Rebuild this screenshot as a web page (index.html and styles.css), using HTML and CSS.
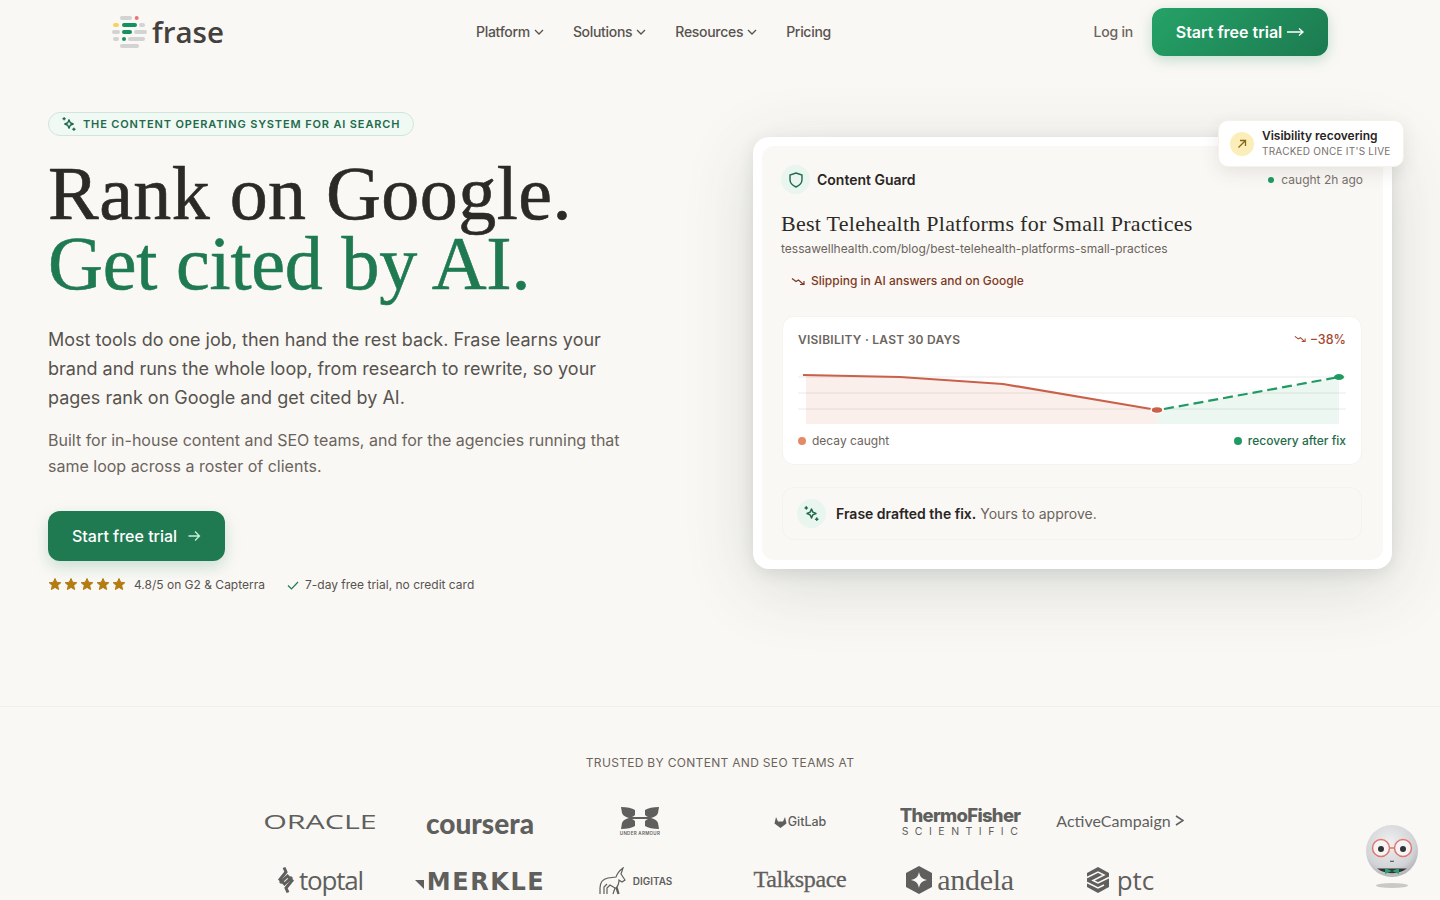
FILE: index.html
```html
<!DOCTYPE html>
<html lang="en">
<head>
    <meta charset="UTF-8">
    <meta name="viewport" content="width=device-width, initial-scale=1.0">
    <title>Frase</title>
    <link rel="stylesheet" href="styles.css">
</head>
<body>
    <!-- Top navigation -->
    <header class="nav">
        <a class="brand" href="#">
            <svg class="brand-mark" width="36" height="34" viewBox="0 0 36 34">
                <g fill="#d3d3d3">
                    <rect x="8" y="1" width="12" height="4" rx="2"/>
                    <rect x="27" y="8" width="6" height="4" rx="2"/>
                    <rect x="0" y="15" width="8" height="4" rx="2"/>
                    <rect x="22" y="15" width="13" height="4" rx="2"/>
                    <rect x="1" y="22" width="6" height="4" rx="2"/>
                    <rect x="16" y="22" width="17" height="4" rx="2"/>
                    <rect x="8" y="29" width="19" height="4" rx="2"/>
                </g>
                <circle cx="24.700" cy="3" r="2" fill="#e87474"/>
                <rect x="1" y="8" width="6" height="4" rx="2" fill="#f5d264"/>
                <rect x="10" y="8" width="15" height="4" rx="2" fill="#14915f"/>
                <rect x="10" y="15" width="10" height="4" rx="2" fill="#14915f"/>
                <circle cx="12" cy="24" r="2" fill="#14915f"/>
            </svg>
            <span class="brand-name">frase</span>
        </a>
        <nav class="nav-links">
            <a href="#">Platform <svg class="chev" width="10" height="6" viewBox="0 0 10 6"><path d="M1 1l4 4 4-4"/></svg></a>
            <a href="#">Solutions <svg class="chev" width="10" height="6" viewBox="0 0 10 6"><path d="M1 1l4 4 4-4"/></svg></a>
            <a href="#">Resources <svg class="chev" width="10" height="6" viewBox="0 0 10 6"><path d="M1 1l4 4 4-4"/></svg></a>
            <a href="#">Pricing</a>
        </nav>
        <div class="nav-actions">
            <a class="login" href="#">Log in</a>
            <a class="btn-nav" href="#">Start free trial
                <svg width="17" height="10" viewBox="0 0 17 10"><path d="M0 5h16M12 1.500L16 5l-4 3.500"/></svg>
            </a>
        </div>
    </header>

    <main class="hero">
        <section class="hero-copy">
            <div class="eyebrow">
                <svg class="spark" width="14" height="14" viewBox="2 2 20 20"><path d="M12 6l1.800 4.200L18 12l-4.200 1.800L12 18l-1.800-4.200L6 12l4.200-1.800z"/><path d="M5 3v3M3.500 4.500h3M19 18v3M17.500 19.500h3"/></svg>
                THE CONTENT OPERATING SYSTEM FOR AI SEARCH
            </div>
            <h1>Rank on Google.<br><em>Get cited by AI.</em></h1>
            <p class="lead">Most tools do one job, then hand the rest back. Frase learns your brand and runs the whole loop, from research to rewrite, so your pages rank on Google and get cited by AI.</p>
            <p class="sub">Built for in-house content and SEO teams, and for the agencies running that same loop across a roster of clients.</p>
            <a class="btn-main" href="#">Start free trial
                <svg width="14" height="14" viewBox="0 0 14 14"><path d="M1.500 7h11M8 2.500L12.500 7 8 11.500"/></svg>
            </a>
            <div class="proof">
                <svg class="stars" width="78" height="15" viewBox="0 0 78 15">
                    <path d="M7 1.500l1.700 3.800 4.100.4-3.100 2.700.9 4.100L7 10.400l-3.600 2.100.9-4.100L1.200 5.700l4.100-.4z"/>
                    <path d="M23 1.500l1.700 3.800 4.100.4-3.100 2.700.9 4.100L23 10.400l-3.600 2.100.9-4.100-3.100-2.700 4.100-.4z"/>
                    <path d="M39 1.500l1.700 3.800 4.100.4-3.100 2.700.9 4.100L39 10.400l-3.600 2.100.9-4.100-3.100-2.700 4.100-.4z"/>
                    <path d="M55 1.500l1.700 3.800 4.100.4-3.100 2.700.9 4.100L55 10.400l-3.600 2.100.9-4.100-3.100-2.700 4.100-.4z"/>
                    <path d="M71 1.500l1.700 3.800 4.100.4-3.100 2.700.9 4.100L71 10.400l-3.600 2.100.9-4.100-3.100-2.700 4.100-.4z"/>
                </svg>
                <span>4.8/5 on G2 &amp; Capterra</span>
                <svg class="check" width="14" height="14" viewBox="0 0 14 14"><path d="M2 7.500l3.500 3.500L12 4"/></svg>
                <span>7-day free trial, no credit card</span>
            </div>
        </section>

        <section class="card">
            <div class="toast">
                <span class="toast-icon"><svg width="10" height="10" viewBox="0 0 10 10"><path d="M1.500 8.500l7-7M3 1.500h5.500V7"/></svg></span>
                <div>
                    <div class="toast-title">Visibility recovering</div>
                    <div class="toast-sub">TRACKED ONCE IT'S LIVE</div>
                </div>
            </div>
            <div class="card-inner">
                <div class="card-head">
                    <div class="guard">
                        <span class="round-icon"><svg width="14" height="16" viewBox="0 0 14 16"><path d="M7 1l6 2v4.500c0 3.500-2.500 6-6 7.500-3.500-1.500-6-4-6-7.500V3z"/></svg></span>
                        Content Guard
                    </div>
                    <div class="caught"><i class="dot"></i>caught 2h ago</div>
                </div>
                <h2>Best Telehealth Platforms for Small Practices</h2>
                <div class="url">tessawellhealth.com/blog/best-telehealth-platforms-small-practices</div>
                <div class="slip">
                    <svg class="trend" width="14" height="9" viewBox="0 0 14 9"><path d="M1 1.500l4 3 2.500-1.500 5 4.500M9 7.500h4V4"/></svg>
                    Slipping in AI answers and on Google
                </div>

                <div class="chart-box">
                    <div class="chart-top">
                        <span class="chart-label">VISIBILITY · LAST 30 DAYS</span>
                        <span class="chart-delta"><svg class="trend" width="12" height="8" viewBox="0 0 14 9"><path d="M1 1.500l4 3 2.500-1.500 5 4.500M9 7.500h4V4"/></svg>−38%</span>
                    </div>
                    <svg class="chart" width="548" height="60" viewBox="0 0 548 60">
                        <path d="M8 11L102 13 205 20 359 46V60H8z" fill="#fbefec"/>
                        <path d="M359 46L541 13V60H359z" fill="#edf7f1"/>
                        <path class="grid" d="M0 13h548M0 29h548M0 45h548"/>
                        <path d="M5 11L102 13 205 20 359 46" fill="none" stroke="#c9604a" stroke-width="2.200"/>
                        <path d="M366 45L541 13" fill="none" stroke="#1f9a62" stroke-width="2.200" stroke-dasharray="10 5"/>
                        <ellipse cx="359" cy="46" rx="6" ry="3.500" fill="#c9604a" stroke="#fff" stroke-width="1.500"/>
                        <ellipse cx="541" cy="13" rx="5" ry="3" fill="#1f9a62"/>
                    </svg>
                    <div class="chart-legend">
                        <span><i class="dot dot-decay"></i>decay caught</span>
                        <span class="legend-good"><i class="dot"></i>recovery after fix</span>
                    </div>
                </div>

                <div class="fix">
                    <span class="round-icon"><svg class="spark" width="15" height="15" viewBox="2 2 20 20"><path d="M12 6l1.800 4.200L18 12l-4.200 1.800L12 18l-1.800-4.200L6 12l4.200-1.800z"/><path d="M5 3v3M3.500 4.500h3M19 18v3M17.500 19.500h3"/></svg></span>
                    <span><b>Frase drafted the fix.</b> Yours to approve.</span>
                </div>
            </div>
        </section>
    </main>

    <section class="logos">
        <div class="logos-title">TRUSTED BY CONTENT AND SEO TEAMS AT</div>
        <div class="logo-grid">
            <div class="logo l-oracle">ORACLE</div>
            <div class="logo l-coursera">coursera</div>
            <div class="logo l-ua">
                <svg width="44" height="22" viewBox="0 0 44 22"><path d="M3 0C9 0 14 1 17 3L17 8C16 9 15 9.500 14 10L30 10C29 9.500 28 9 27 8L27 3C30 1 35 0 41 0L40 6C39 9 36 10 33 11 36 12 39 13 40 16L41 22C35 22 30 21 27 19L27 14C28 13 29 12.500 30 12L14 12C15 12.500 16 13 17 14L17 19C14 21 9 22 3 22L4 16C5 13 8 12 11 11 8 10 5 9 4 6Z"/></svg>
                <span>UNDER ARMOUR</span>
            </div>
            <div class="logo l-gitlab">
                <svg width="13" height="12" viewBox="0 0 13 12"><path d="M6.500 12L.5 7.500 2 1l2 4.500h5L11 1l1.500 6.500z"/></svg>GitLab
            </div>
            <div class="logo l-thermo"><b>ThermoFisher</b><span>SCIENTIFIC</span></div>
            <div class="logo l-active">ActiveCampaign <svg width="9" height="11" viewBox="0 0 9 11"><path d="M1 1l7 4.500L1 10"/></svg></div>

            <div class="logo l-toptal">
                <svg width="18" height="28" viewBox="0 0 18 28"><path d="M7 1.500L9 6 3 13.500 7.500 18 15 11"/><path d="M11 26.500L9 22 15 14.500 10.500 10 3 17"/></svg>toptal
            </div>
            <div class="logo l-merkle"><svg class="merkle-mark" width="9" height="9" viewBox="0 0 9 9"><path d="M0 0h9v9z"/></svg>MERKLE</div>
            <div class="logo l-digitas">
                <svg width="28" height="28" viewBox="0 0 28 28"><path d="M1 27v-6c0-5 3-9 8-10l8-1c1-3 3-6 7-9l-2 6 4 6-3 2-3-2c0 4-1 6-3 8l2 6M8 27v-6l3-3 5 3-2 6M5 27v-7l3-3M20 27l-2-7"/></svg>
                DIGITAS
            </div>
            <div class="logo l-talk">Talkspace</div>
            <div class="logo l-andela">
                <svg width="26" height="28" viewBox="0 0 26 28"><path fill-rule="evenodd" d="M13 0l13 7v14l-13 7-13-7V7zM13 6c-1 5-3 7-8 8 5 1 7 3 8 8 1-5 3-7 8-8-5-1-7-3-8-8z"/></svg>andela
            </div>
            <div class="logo l-ptc">
                <svg width="24" height="26" viewBox="0 0 24 26"><path d="M12 0l11 6v14l-11 6-11-6V6z"/><path class="ptc-cut" d="M1 10.500L12 5l6 3-11 5.500 5 2.500 11-5.500M1 15.500L12 21l6-3"/></svg>ptc
            </div>
        </div>
    </section>

    <!-- Floating assistant -->
    <div class="bot">
        <div class="bot-head">
            <svg width="52" height="52" viewBox="0 0 52 52">
                <defs>
                    <radialGradient id="botFace" cx="45%" cy="35%" r="70%"><stop offset="0" stop-color="#f0f0f1"/><stop offset="0.7" stop-color="#d2d3d6"/><stop offset="1" stop-color="#a9abae"/></radialGradient>
                </defs>
                <circle cx="26" cy="26" r="26" fill="url(#botFace)"/>
                <path d="M11 43.500h30a26 26 0 0 1-30 0z" fill="#333"/>
                <path d="M26 46l-7-3v6l7-3 7 3v-6z" fill="#2f9e73"/>
                <circle cx="15" cy="23" r="8.500" fill="#f4f4f5" stroke="#e07570" stroke-width="1.500"/>
                <circle cx="37" cy="23" r="8.500" fill="#f4f4f5" stroke="#e07570" stroke-width="1.500"/>
                <path d="M23.500 23h5" stroke="#e07570" stroke-width="1.500"/>
                <circle cx="15" cy="24" r="3" fill="#333"/>
                <circle cx="37" cy="24" r="3" fill="#333"/>
                <path d="M24 36q2 1 4 0" fill="none" stroke="#444"/>
            </svg>
        </div>
        <div class="bot-shadow"></div>
    </div>
</body>
</html>
```

FILE: styles.css
```css
* {
    box-sizing: border-box;
}
html, body {
    height: 900px;
    overflow: hidden;
}
body {
    margin: 0;
    background-color: #faf8f5;
    color: #57534e;
    font-family: Inter, "Liberation Sans", sans-serif;
}
a {
    color: inherit;
    text-decoration: none;
}

/* nav */
.nav {
    display: flex;
    align-items: center;
    height: 64px;
    padding: 0 112px;
}
.brand {
    display: flex;
    align-items: center;
    gap: 4px;
    width: 364px;
}
.brand-name {
    font-family: "Open Sans", sans-serif;
    font-size: 29.500px;
    font-weight: 600;
    color: #44403c;
    line-height: 1;
}
.nav-links {
    display: flex;
    gap: 29px;
    padding-bottom: 1px;
    font-size: 14px;
    font-weight: 500;
    letter-spacing: -0.300px;
}
.nav-links a {
    display: flex;
    align-items: center;
    gap: 4px;
}
.chev {
    fill: none;
    stroke: currentColor;
    stroke-width: 1.300;
}
.nav-actions {
    display: flex;
    align-items: center;
    gap: 19px;
    margin-left: auto;
}
.login {
    padding-bottom: 1px;
    font-size: 14px;
    font-weight: 500;
    letter-spacing: -0.200px;
    color: #6b645c;
}
.btn-nav {
    display: flex;
    align-items: center;
    justify-content: center;
    gap: 5px;
    width: 176px;
    height: 48px;
    border-radius: 12px;
    background: linear-gradient(135deg, #25a267, #1c7a50);
    box-shadow: 0 4px 14px rgba(31, 138, 90, 0.25);
    color: #fff;
    font-size: 16px;
    font-weight: 600;
}
.btn-nav svg {
    fill: none;
    stroke: #fff;
    stroke-width: 1.300;
}

/* hero */
.hero {
    display: flex;
    justify-content: space-between;
    height: 643px;
    padding: 48px 48px 0;
    border-bottom: 1px solid #f1efea;
}
.hero-copy {
    width: 600px;
}
.eyebrow {
    display: inline-flex;
    align-items: center;
    gap: 7px;
    height: 24px;
    padding: 0 13px 1px;
    border: 1px solid #cfe6da;
    border-radius: 12px;
    background-color: #f1f9f5;
    color: #1f6b4a;
    font-size: 11px;
    font-weight: 600;
    letter-spacing: 0.860px;
}
.spark {
    fill: none;
    stroke: #1f6b4a;
    stroke-width: 2;
    stroke-linecap: round;
    stroke-linejoin: round;
}
h1 {
    margin: 22px 0 0;
    font-family: "Liberation Serif", serif;
    font-size: 76px;
    font-weight: 400;
    line-height: 70px;
    letter-spacing: 0.450px;
    -webkit-text-stroke: 0.600px currentColor;
    color: #2c2a26;
}
h1 em {
    font-style: normal;
    letter-spacing: -0.200px;
    color: #1f7a52;
}
.lead {
    margin: 28px 0 0;
    font-size: 18px;
    line-height: 28.800px;
    color: #57534e;
}
.sub {
    margin: 15px 0 0;
    width: 590px;
    font-size: 16px;
    line-height: 26px;
    color: #6b645c;
}
.btn-main {
    display: inline-flex;
    align-items: center;
    gap: 10px;
    margin-top: 32px;
    height: 50px;
    padding: 0 24px;
    border-radius: 12px;
    background-color: #1f7a52;
    box-shadow: 0 6px 16px rgba(31, 138, 90, 0.22);
    color: #fff;
    font-size: 16px;
    font-weight: 500;
}
.btn-main svg {
    fill: none;
    stroke: #c9f0dc;
    stroke-width: 1.300;
}
.proof {
    display: flex;
    align-items: center;
    margin-top: 16px;
    font-size: 12px;
    color: #57534e;
}
.stars {
    margin-right: 8px;
    fill: #b47c10;
    stroke: #b47c10;
    stroke-linejoin: round;
}
.check {
    margin: 0 5px 0 21px;
    fill: none;
    stroke: #1f7a52;
    stroke-width: 1.200;
}

/* card */
.card {
    position: relative;
    width: 639px;
    height: 432px;
    margin-top: 25px;
    padding: 9px;
    border-radius: 16px;
    background-color: #fff;
    box-shadow: 0 4px 16px rgba(40, 60, 50, 0.1), 0 16px 70px rgba(40, 60, 50, 0.16);
}
.card-inner {
    height: 414px;
    padding: 19px 20px 0 19px;
    border-radius: 12px;
    background-color: #faf8f5;
}
.toast {
    position: absolute;
    top: -17px;
    right: -12px;
    display: flex;
    align-items: center;
    gap: 8px;
    width: 186px;
    height: 47px;
    padding: 0 11px;
    border: 1px solid #f6f2e8;
    border-radius: 10px;
    background-color: #fff;
    box-shadow: 0 6px 18px rgba(60, 60, 50, 0.1);
}
.toast-icon {
    flex: none;
    display: flex;
    align-items: center;
    justify-content: center;
    width: 24px;
    height: 24px;
    border-radius: 50%;
    background-color: #fbeeb9;
}
.toast-icon svg {
    fill: none;
    stroke: #8a6414;
    stroke-width: 1.300;
}
.toast-title {
    font-size: 12px;
    font-weight: 600;
    color: #292524;
    line-height: 16px;
}
.toast-sub {
    font-size: 10px;
    letter-spacing: 0.230px;
    color: #78716c;
    line-height: 15px;
    white-space: nowrap;
}
.card-head {
    display: flex;
    justify-content: space-between;
    align-items: flex-start;
}
.guard {
    display: flex;
    align-items: center;
    gap: 7px;
    font-size: 14px;
    font-weight: 600;
    color: #292524;
}
.round-icon {
    display: flex;
    align-items: center;
    justify-content: center;
    width: 29px;
    height: 29px;
    border-radius: 50%;
    background-color: #e9f5ef;
}
.round-icon svg {
    fill: none;
    stroke: #1f6b4a;
    stroke-width: 1.400;
}
.round-icon .spark {
    stroke-width: 2;
}
.caught {
    display: flex;
    align-items: center;
    gap: 7px;
    margin-top: 7px;
    font-size: 12px;
    color: #78716c;
}
.dot {
    display: inline-block;
    width: 6px;
    height: 6px;
    border-radius: 50%;
    background-color: #1f9a62;
}
h2 {
    margin: 16px 0 0;
    font-family: "Liberation Serif", serif;
    font-size: 22px;
    font-weight: 400;
    line-height: 28px;
    letter-spacing: 0.270px;
    color: #2c2a26;
}
.url {
    margin-top: 2px;
    font-size: 12px;
    line-height: 18px;
    color: #6b645c;
}
.slip {
    display: inline-flex;
    align-items: center;
    gap: 6px;
    margin-top: 9px;
    padding: 5px 10px;
    border-radius: 8px;
    background-color: #fbf7f4;
    font-size: 12px;
    font-weight: 500;
    line-height: 18px;
    color: #7c3a24;
}
.trend {
    fill: none;
    stroke: currentColor;
    stroke-width: 1.200;
}
.chart-box {
    margin: 21px 1px 0;
    height: 149px;
    padding: 13px 15px 0;
    border: 1px solid #f5f3ee;
    border-radius: 12px;
    background-color: #fff;
}
.chart-top {
    display: flex;
    justify-content: space-between;
    align-items: center;
    height: 18px;
}
.chart-label {
    font-size: 12px;
    font-weight: 600;
    letter-spacing: 0.250px;
    color: #6b645c;
}
.chart-delta {
    display: flex;
    align-items: center;
    gap: 4px;
    font-size: 12.500px;
    font-weight: 500;
    color: #a4492f;
}
.chart {
    display: block;
    margin-top: 16px;
}
.grid {
    fill: none;
    stroke: #000;
    stroke-opacity: 0.060;
    stroke-width: 1.500;
}
.chart-legend {
    display: flex;
    justify-content: space-between;
    margin-top: 9px;
    font-size: 12px;
    line-height: 16px;
    color: #6b645c;
}
.chart-legend .dot {
    width: 8px;
    height: 8px;
    margin-right: 6px;
}
.chart-legend .dot-decay {
    background-color: #e48a66;
}
.legend-good {
    font-weight: 500;
    color: #1f6b4a;
}
.fix {
    display: flex;
    align-items: center;
    gap: 10px;
    height: 53px;
    margin: 22px 1px 0;
    padding: 0 14px;
    border: 1px solid #f5f3ee;
    border-radius: 12px;
    font-size: 14px;
    color: #6b645c;
}
.fix b {
    font-weight: 600;
    color: #292524;
}

/* logo wall */
.logos {
    padding-top: 47px;
}
.logos-title {
    text-align: center;
    font-size: 12px;
    letter-spacing: 0.310px;
    line-height: 18px;
    color: #6b645c;
}
.logo-grid {
    display: grid;
    grid-template-columns: repeat(6, 160px);
    grid-auto-rows: 59px;
    justify-content: center;
    margin-top: 20px;
}
.logo {
    display: flex;
    align-items: center;
    justify-content: center;
    color: #5f5f5d;
    fill: #5f5f5d;
}
.l-oracle {
    font-family: "Open Sans", sans-serif;
    font-size: 20px;
    font-weight: 500;
    transform: scaleX(1.520);
}
.l-coursera {
    padding-top: 2px;
    font-family: Lato, sans-serif;
    font-weight: 900;
    font-size: 28px;
    line-height: 1;
}
.l-ua {
    flex-direction: column;
    font-size: 4.500px;
    font-weight: 600;
    letter-spacing: 0.300px;
    gap: 2px;
}
.l-gitlab {
    gap: 1px;
    font-size: 12.500px;
    font-weight: 500;
}
.l-thermo {
    flex-direction: column;
}
.l-thermo b {
    font-size: 18.500px;
    font-weight: 800;
    line-height: 19px;
    letter-spacing: -0.700px;
}
.l-thermo span {
    margin: 1px 0 0 6px;
    font-size: 10.500px;
    line-height: 11px;
    letter-spacing: 6.500px;
}
.l-active {
    gap: 4px;
    padding-bottom: 3px;
    font-family: Lato, sans-serif;
    font-size: 16px;
}
.l-active svg {
    fill: none;
    stroke: #5f5f5d;
    stroke-width: 1.500;
}
.l-toptal {
    gap: 4px;
    padding-bottom: 2px;
    font-family: "Open Sans", sans-serif;
    font-size: 26px;
    letter-spacing: -1.200px;
}
.l-toptal svg {
    fill: none;
    stroke: #5f5f5d;
    stroke-width: 3;
}
.l-merkle {
    gap: 3px;
    padding-top: 2px;
    font-family: "DejaVu Sans", sans-serif;
    font-size: 24px;
    font-weight: 700;
    letter-spacing: 1.600px;
}
.merkle-mark {
    margin-top: 5px;
}
.l-digitas {
    gap: 6px;
    padding-right: 9px;
    font-size: 10px;
    font-weight: 600;
}
.l-digitas svg {
    fill: none;
    stroke: #5f5f5d;
    stroke-width: 1.200;
}
.l-talk {
    padding-bottom: 3px;
    font-family: "Liberation Serif", serif;
    font-size: 24px;
    letter-spacing: -0.300px;
    -webkit-text-stroke: 0.300px currentColor;
}
.l-andela {
    gap: 5px;
    padding-bottom: 2px;
    font-family: "Liberation Serif", serif;
    font-size: 30px;
    letter-spacing: -0.300px;
}
.l-ptc {
    gap: 7px;
    padding-bottom: 2px;
    font-family: "Open Sans", sans-serif;
    font-size: 26px;
}
.ptc-cut {
    fill: none;
    stroke: #faf8f5;
    stroke-width: 1.500;
}

/* assistant */
.bot {
    position: fixed;
    right: 22px;
    bottom: 12px;
    width: 52px;
}
.bot-head svg {
    display: block;
}
.bot-shadow {
    width: 32px;
    height: 5px;
    margin: 6px auto 0;
    border-radius: 50%;
    background-color: #c9c9c6;
}
```
